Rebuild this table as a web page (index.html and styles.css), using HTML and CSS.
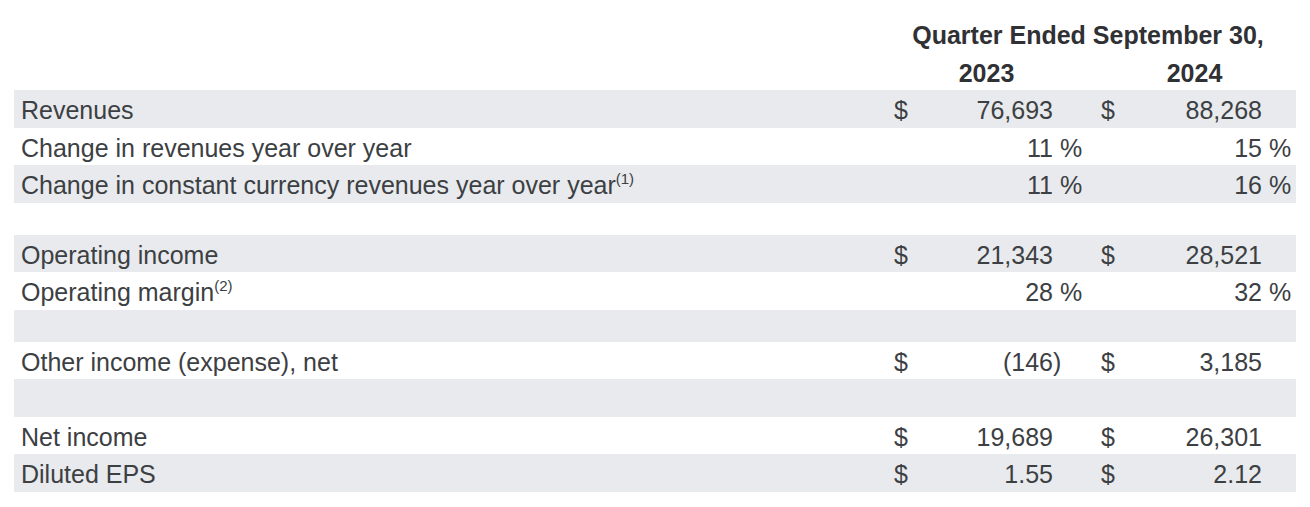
FILE: index.html
```html
<!DOCTYPE html>
<html>
<head>
<meta charset="utf-8">
<link rel="stylesheet" href="styles.css">
</head>
<body>
<div class="table">
  <div class="row head">
    <div class="cell span-all">Quarter Ended September 30,</div>
  </div>
  <div class="row head">
    <div class="cell"></div>
    <div class="cell span-year">2023</div>
    <div class="cell span-year2">2024</div>
  </div>

  <div class="row shade">
    <div class="cell label">Revenues</div>
    <div class="cell cur">$</div><div class="cell num">76,693</div><div class="cell suf"></div>
    <div class="cell cur2">$</div><div class="cell num">88,268</div><div class="cell suf"></div>
  </div>
  <div class="row">
    <div class="cell label">Change in revenues year over year</div>
    <div class="cell cur"></div><div class="cell num">11</div><div class="cell suf">&nbsp;%</div>
    <div class="cell cur2"></div><div class="cell num">15</div><div class="cell suf">&nbsp;%</div>
  </div>
  <div class="row shade">
    <div class="cell label">Change in constant currency revenues year over year<sup>(1)</sup></div>
    <div class="cell cur"></div><div class="cell num">11</div><div class="cell suf">&nbsp;%</div>
    <div class="cell cur2"></div><div class="cell num">16</div><div class="cell suf">&nbsp;%</div>
  </div>
  <div class="row spacer"></div>

  <div class="row shade">
    <div class="cell label">Operating income</div>
    <div class="cell cur">$</div><div class="cell num">21,343</div><div class="cell suf"></div>
    <div class="cell cur2">$</div><div class="cell num">28,521</div><div class="cell suf"></div>
  </div>
  <div class="row">
    <div class="cell label">Operating margin<sup>(2)</sup></div>
    <div class="cell cur"></div><div class="cell num">28</div><div class="cell suf">&nbsp;%</div>
    <div class="cell cur2"></div><div class="cell num">32</div><div class="cell suf">&nbsp;%</div>
  </div>
  <div class="row shade spacer"></div>

  <div class="row">
    <div class="cell label">Other income (expense), net</div>
    <div class="cell cur">$</div><div class="cell num">(146</div><div class="cell suf">)</div>
    <div class="cell cur2">$</div><div class="cell num">3,185</div><div class="cell suf"></div>
  </div>
  <div class="row shade"></div>

  <div class="row">
    <div class="cell label">Net income</div>
    <div class="cell cur">$</div><div class="cell num">19,689</div><div class="cell suf"></div>
    <div class="cell cur2">$</div><div class="cell num">26,301</div><div class="cell suf"></div>
  </div>
  <div class="row shade">
    <div class="cell label">Diluted EPS</div>
    <div class="cell cur">$</div><div class="cell num">1.55</div><div class="cell suf"></div>
    <div class="cell cur2">$</div><div class="cell num">2.12</div><div class="cell suf"></div>
  </div>
</div>
</body>
</html>
```

FILE: styles.css
```css
html, body {
  margin: 0;
  padding: 0;
  background: #ffffff;
}

body {
  font-family: "Liberation Sans", Arial, sans-serif;
  font-size: 25px;
  color: #3c4043;
}

.table {
  margin: 15px 14px 0 14px;
  width: 1282px;
}

.row {
  display: grid;
  grid-template-columns: 872px 44px 123px 40px 47px 122px 34px;
  height: 37.5px;
}

.row.shade {
  background: #e8eaed;
}

.row.spacer {
  height: 32px;
}

.cell {
  line-height: 33.5px;
  padding-top: 4px;
  white-space: nowrap;
}

.head .cell {
  font-weight: bold;
  color: #303134;
  text-align: center;
}

.span-all {
  grid-column: 2 / 8;
  padding-right: 6px;
}

.span-year {
  grid-column: 2 / 5;
  padding-right: 6px;
}

.span-year2 {
  grid-column: 5 / 8;
}

.label {
  padding-left: 7px;
}

.cur {
  padding-left: 8px;
}

.cur2 {
  padding-left: 8px;
}

.num {
  text-align: right;
}

.suf {
  text-align: left;
}

sup {
  font-size: 15px;
  line-height: 0;
  vertical-align: 10px;
}
```
